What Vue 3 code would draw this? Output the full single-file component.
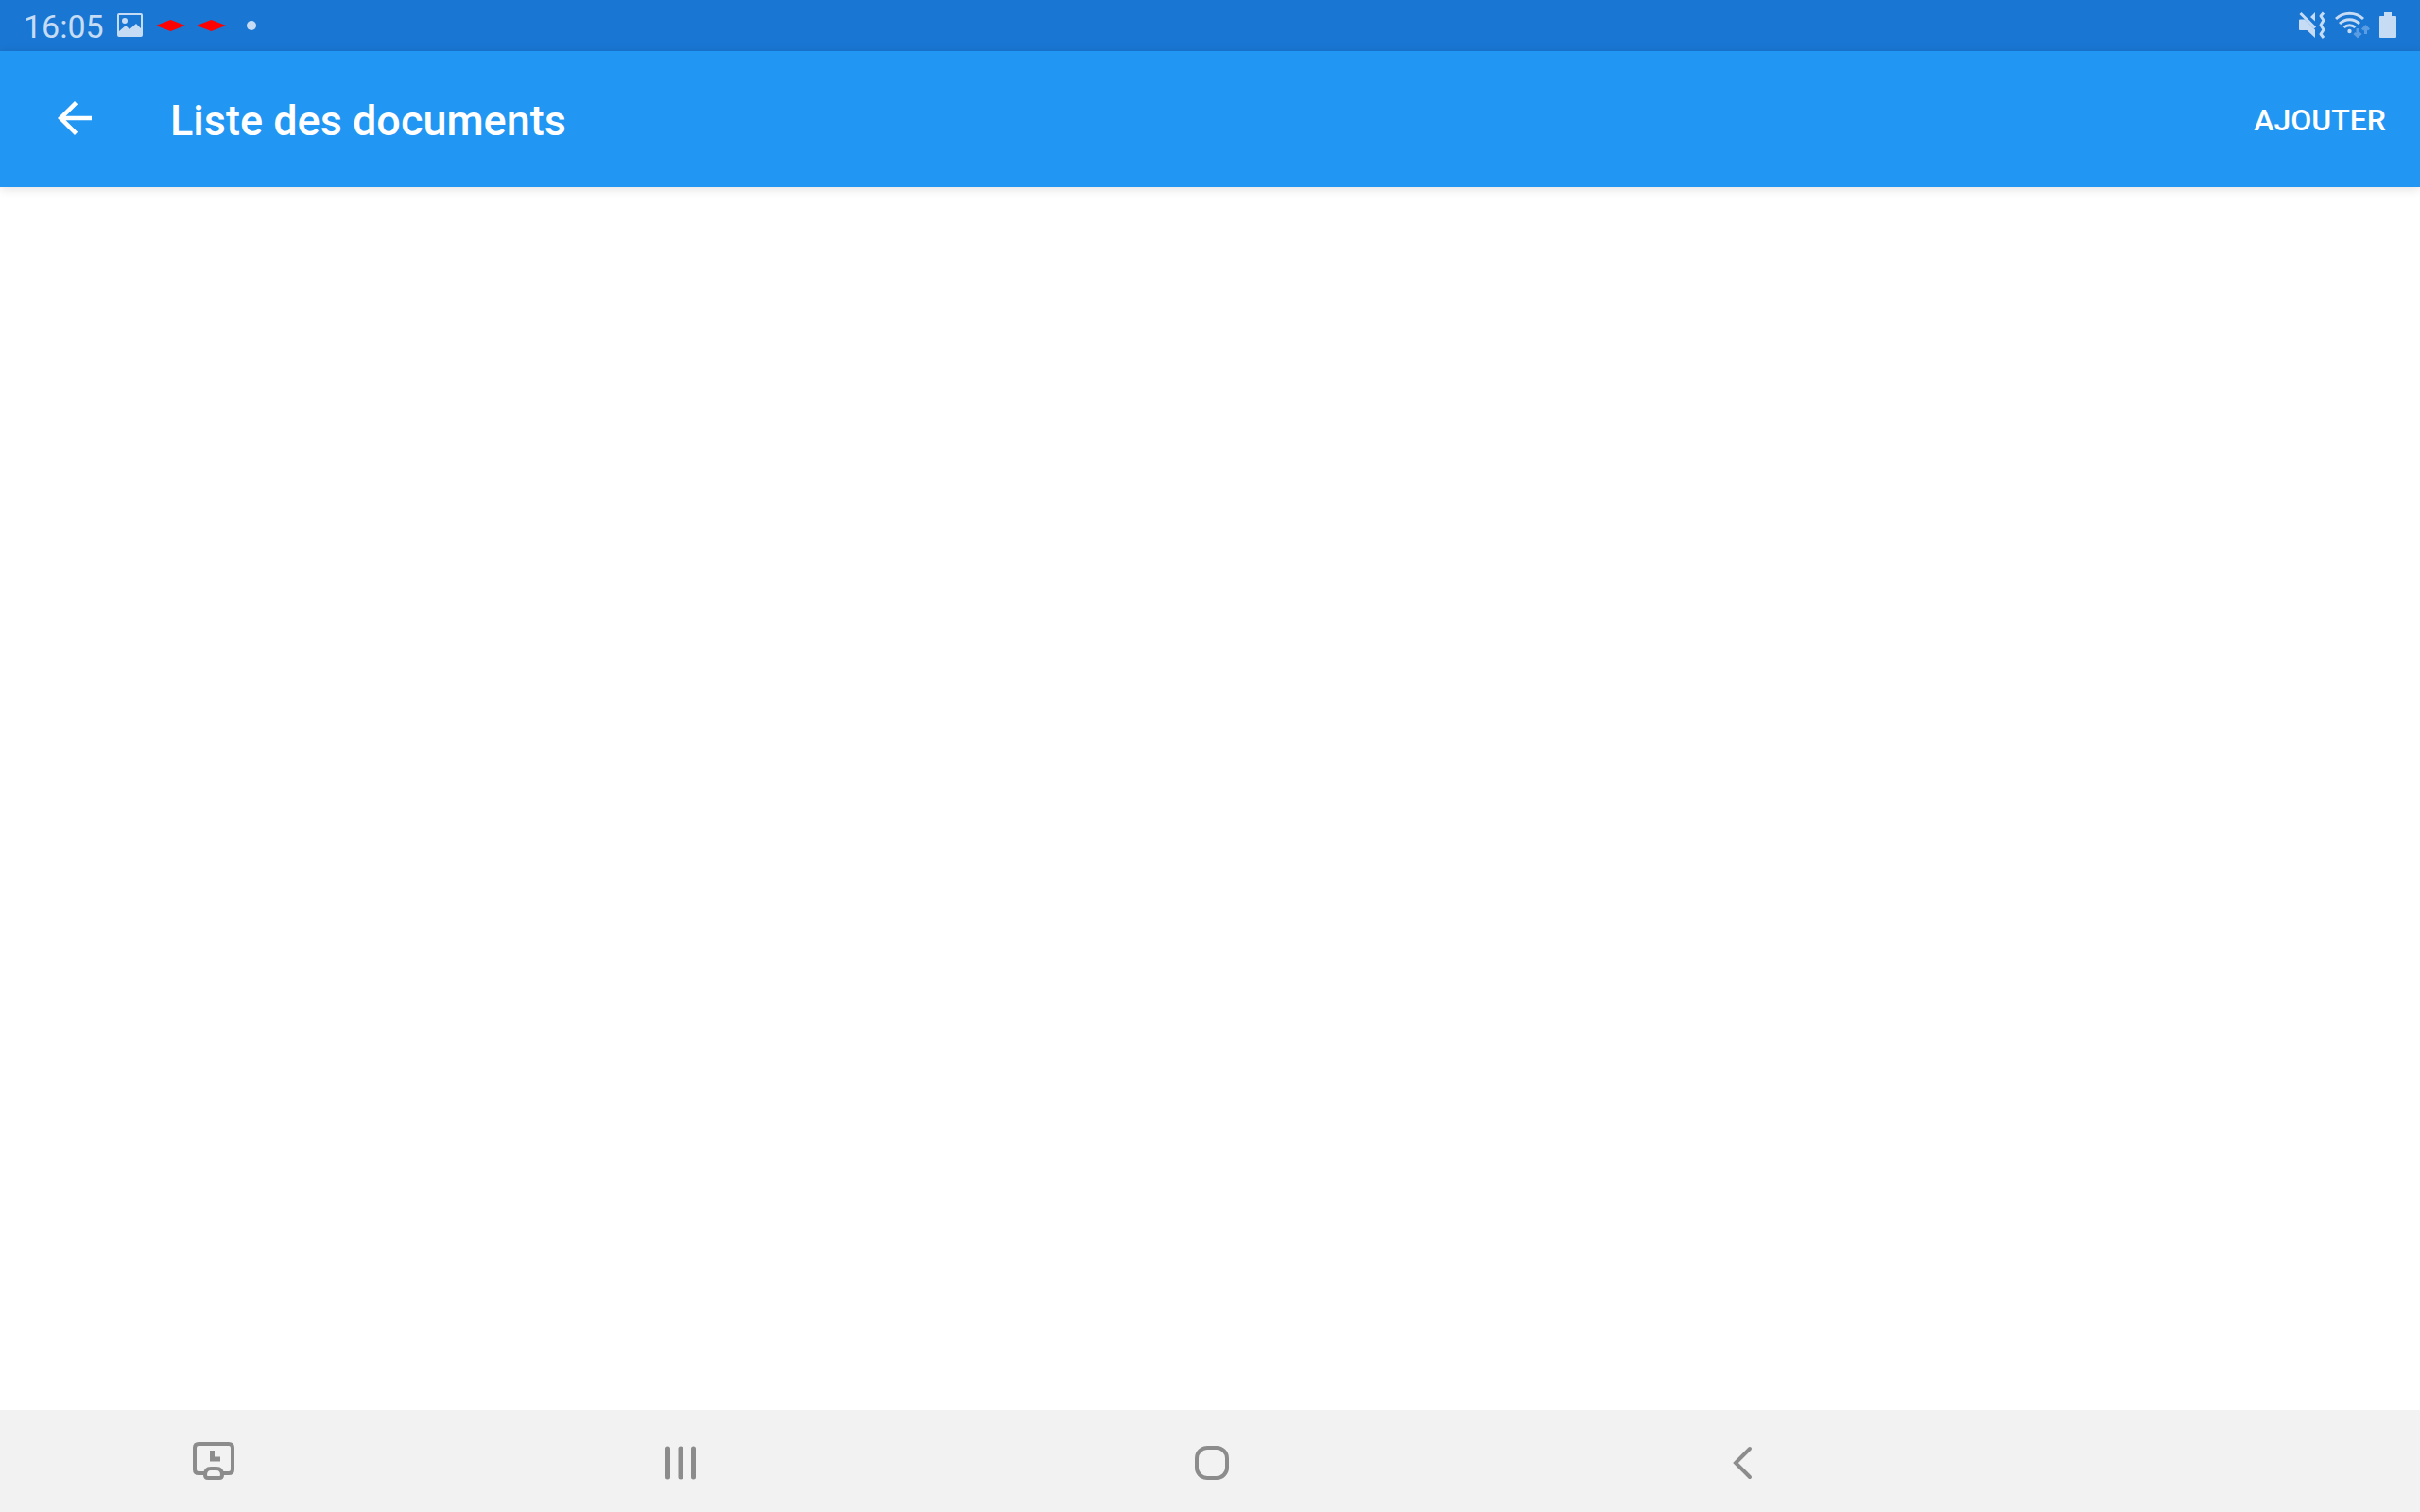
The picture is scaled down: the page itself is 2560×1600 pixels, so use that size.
<template>
  <div class="screen">
    <div class="status-bar">
      <div class="status-left">
        <span class="clock">{{ time }}</span>
        <svg class="picture" width="28" height="26" viewBox="0 0 28 26" aria-hidden="true">
          <path
            fill-rule="evenodd"
            d="M2 0h23a2 2 0 0 1 2 2v21a2 2 0 0 1-2 2H2a2 2 0 0 1-2-2V2A2 2 0 0 1 2 0zM2 2v17l7-6 4 4 7-6 5 5V2zM8 5a3 3 0 1 1 0 6 3 3 0 0 1 0-6z"
          />
        </svg>
        <svg v-for="n in 2" :key="n" class="diamond" width="31" height="12" viewBox="0 0 31 12" aria-hidden="true">
          <path d="M0 6L15.500 0L31 6L15.500 12z" />
        </svg>
        <span class="dot"></span>
      </div>

      <div class="status-right">
        <svg width="28" height="30" viewBox="0 0 28 30" aria-hidden="true">
          <path d="M0 9.500q0-1 1-1h5l11 11v8.500l-8.500-8H1q-1 0-1-1zM17 1v9.500L12 6z" />
          <path class="line" d="M1.500 2L17 17.500" />
          <path class="line wave" d="M26 1.500L23 5l3 4.500-3 5 3 5-3 4.500 3 4" />
        </svg>
        <svg width="37" height="30" viewBox="0 0 37 30" aria-hidden="true">
          <path class="line" d="M1 8a21 21 0 0 1 29 0M5 13a15 15 0 0 1 21 0M9.500 17a9 9 0 0 1 12 0" />
          <circle cx="15.500" cy="21" r="2.200" />
          <path class="traffic" d="M24 18v8M20.500 23l3.500 3.500 3.500-3.500M32.500 24v-8M29 19.500l3.500-3.500 3.500 3.500" />
        </svg>
        <svg width="18" height="30" viewBox="0 0 18 30" aria-hidden="true">
          <path d="M5 1h8v4h4q1 0 1 1v21q0 1-1 1H1q-1 0-1-1V6q0-1 1-1h4z" />
        </svg>
      </div>
    </div>

    <header>
      <button class="back" type="button" aria-label="Retour">
        <svg width="54" height="54" viewBox="0 0 24 24" aria-hidden="true">
          <path d="M20 11H7.830l5.590-5.590L12 4l-8 8 8 8 1.410-1.410L7.830 13H20z" />
        </svg>
      </button>
      <h1>Liste des documents</h1>
      <button class="add" type="button">AJOUTER</button>
    </header>

    <main></main>

    <nav>
      <button class="capture" type="button" aria-label="Capture">
        <svg width="46" height="40" viewBox="0 0 46 40" aria-hidden="true">
          <path d="M14 33H7q-4 0-4-4V6q0-4 4-4h32q4 0 4 4v23q0 4-4 4h-7" />
          <path d="M14 35q0-7 6-7h6q6 0 6 7 0 3-3 3H17q-3 0-3-3z" />
          <path class="hand" d="M21.500 9v9H30" />
        </svg>
      </button>
      <button type="button" aria-label="Applications récentes">
        <svg width="36" height="36" viewBox="0 0 36 36" aria-hidden="true">
          <path class="bars" d="M4.500 3v30M18 3v30M31.500 3v30" />
        </svg>
      </button>
      <button type="button" aria-label="Accueil">
        <svg width="36" height="36" viewBox="0 0 36 36" aria-hidden="true">
          <rect x="2" y="2" width="32" height="32" rx="11" />
        </svg>
      </button>
      <button type="button" aria-label="Précédent">
        <svg width="36" height="36" viewBox="0 0 36 36" aria-hidden="true">
          <path class="chevron" d="M25 3L10 18l15 15" />
        </svg>
      </button>
    </nav>
  </div>
</template>

<script setup>
import { ref } from 'vue'

const time = ref('16:05')
</script>

<style>
body {
  margin: 0;
  background: #fff;
}
</style>

<style scoped>
.screen {
  display: flex;
  flex-direction: column;
  min-height: 100vh;
  font-family: Roboto, "Noto Sans", sans-serif;
}
svg { display: block; flex: none; }
button {
  border: 0;
  padding: 0;
  background: none;
  color: inherit;
  font: inherit;
  cursor: pointer;
}

.status-bar {
  display: flex;
  justify-content: space-between;
  align-items: center;
  height: 54px;
  padding: 0 25px;
  background: #1976d2;
  color: #c5dcf4;
}
.status-left, .status-right { display: flex; align-items: center; }
.status-bar svg { fill: currentColor; }
.clock { font-size: 34px; line-height: 40px; margin-right: 14px; padding-top: 2px; }
.picture { margin-right: 13px; }
.status-bar .diamond { margin-right: 12px; fill: #f00; }
.dot {
  width: 10px;
  height: 10px;
  margin-left: 10px;
  border-radius: 50%;
  background: currentColor;
}
.status-right { gap: 10px; }
.status-bar .line { fill: none; stroke: currentColor; stroke-width: 3; }
.status-bar .wave { stroke-linejoin: round; }
.traffic { fill: none; stroke: #5b9de2; stroke-width: 3; }

header {
  display: flex;
  align-items: center;
  position: relative;
  height: 144px;
  padding: 0 36px 0 52px;
  background: #2196f3;
  color: #fff;
  box-shadow: 0 2px 10px rgba(0, 0, 0, .12);
}
.back { padding-bottom: 3px; }
.back svg { fill: currentColor; }
h1 {
  flex: 1;
  margin: 0 0 0 74px;
  padding-top: 3px;
  font-size: 45px;
  line-height: 54px;
  font-weight: 500;
}
.add { padding-top: 1px; font-size: 32px; line-height: 40px; font-weight: 500; }

main { flex: 1; }

nav {
  display: grid;
  grid-template-columns: 439fr 562fr 562fr 562fr 435fr;
  height: 108px;
  background: #f2f2f2;
  color: #8c8c8c;
}
nav button {
  display: grid;
  place-items: center;
  padding-top: 4px;
}
nav .capture { padding: 0 0 0 12px; }
nav svg { fill: none; stroke: currentColor; stroke-width: 4; }
nav .hand { stroke-width: 5; }
nav .bars { stroke-width: 5; stroke-linecap: round; }
nav .chevron { stroke-linecap: round; }
</style>
